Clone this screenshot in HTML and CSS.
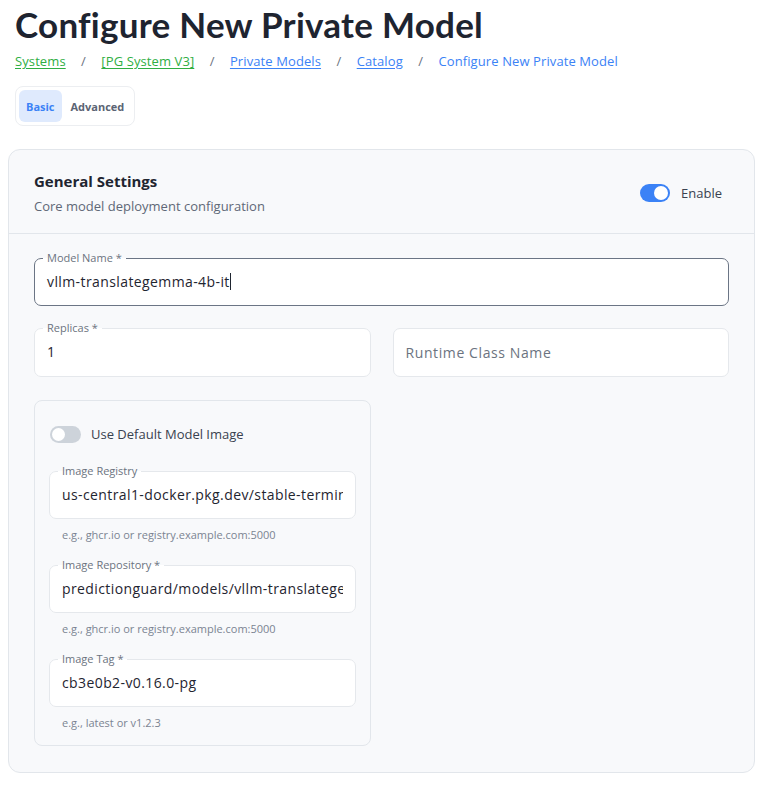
FILE: index.html
```html
<!DOCTYPE html>
<html lang="en">
<head>
<meta charset="utf-8">
<title>Configure New Private Model</title>
<link rel="stylesheet" href="styles.css">
</head>
<body>
<div class="page">
  <header class="page-head">
    <h1 class="page-title">Configure New Private Model</h1>
    <nav class="crumbs">
      <a class="crumb crumb-green" href="#">Systems</a>
      <span class="sep">/</span>
      <a class="crumb crumb-green" href="#">[PG System V3]</a>
      <span class="sep">/</span>
      <a class="crumb crumb-blue" href="#">Private Models</a>
      <span class="sep">/</span>
      <a class="crumb crumb-blue" href="#">Catalog</a>
      <span class="sep">/</span>
      <span class="crumb-current">Configure New Private Model</span>
    </nav>
    <div class="tabs">
      <span class="tab tab-active">Basic</span>
      <span class="tab">Advanced</span>
    </div>
  </header>

  <section class="card">
    <div class="card-head">
      <div class="card-titles">
        <div class="card-title">General Settings</div>
        <div class="card-sub">Core model deployment configuration</div>
      </div>
      <label class="switch-row">
        <span class="switch switch-on"><span class="knob"></span></span>
        <span class="switch-label">Enable</span>
      </label>
    </div>
    <div class="card-body">
      <fieldset class="field field-focus">
        <legend class="field-label">Model Name *</legend>
        <div class="field-value">vllm-translategemma-4b-it<span class="caret"></span></div>
      </fieldset>

      <div class="two-col">
        <fieldset class="field">
          <legend class="field-label">Replicas *</legend>
          <div class="field-value">1</div>
        </fieldset>
        <div class="field-plain">
          <span class="placeholder">Runtime Class Name</span>
        </div>
      </div>

      <div class="two-col">
        <div class="image-box">
          <label class="switch-row image-toggle">
            <span class="switch switch-off"><span class="knob"></span></span>
            <span class="switch-label">Use Default Model Image</span>
          </label>

          <fieldset class="field">
            <legend class="field-label">Image Registry</legend>
            <div class="field-value clip">us-central1-docker.pkg.dev/stable-terminus</div>
          </fieldset>
          <div class="helper">e.g., ghcr.io or registry.example.com:5000</div>

          <fieldset class="field">
            <legend class="field-label">Image Repository *</legend>
            <div class="field-value clip">predictionguard/models/vllm-translategemma</div>
          </fieldset>
          <div class="helper">e.g., ghcr.io or registry.example.com:5000</div>

          <fieldset class="field">
            <legend class="field-label">Image Tag *</legend>
            <div class="field-value clip">cb3e0b2-v0.16.0-pg</div>
          </fieldset>
          <div class="helper helper-last">e.g., latest or v1.2.3</div>
        </div>
        <div></div>
      </div>
    </div>
  </section>
</div>
</body>
</html>
```

FILE: styles.css
```css
* { box-sizing: border-box; }

html, body {
  margin: 0;
  padding: 0;
  background: #ffffff;
}

body {
  font-family: "Open Sans", "Noto Sans", sans-serif;
  color: #1f2937;
}

.page {
  padding: 0 14px 0 8px;
}

.page-head {
  padding-left: 7px;
}

.page-title {
  margin: 0;
  padding-top: 5px;
  font-family: "Lato", "DejaVu Sans", sans-serif;
  font-weight: 700;
  font-size: 35px;
  line-height: 38px;
  color: #1e2430;
  letter-spacing: 0.25px;
}

.crumbs {
  display: flex;
  align-items: center;
  gap: 15.4px;
  margin-top: 9px;
  font-size: 13px;
  line-height: 18px;
  letter-spacing: 0.1px;
}

.crumb {
  text-decoration: underline;
  text-underline-offset: 2px;
}

.crumb-green { color: #2fae43; }
.crumb-blue { color: #3b82f6; }
.crumb-current { color: #3b82f6; }
.sep { color: #6b7280; }

.tabs {
  display: inline-flex;
  gap: 2px;
  margin-top: 16px;
  padding: 3px;
  border: 1px solid #eceef1;
  border-radius: 8px;
  background: #ffffff;
}

.tab {
  display: flex;
  align-items: center;
  height: 32px;
  padding: 0 7px;
  border-radius: 6px;
  font-size: 11px;
  font-weight: 700;
  color: #5b6474;
}

.tab-active {
  background: #dfeafd;
  color: #3b82f6;
}

.card {
  margin-top: 23px;
  border: 1px solid #e2e6eb;
  border-radius: 12px;
  background: #f8f9fb;
}

.card-head {
  display: flex;
  align-items: center;
  justify-content: space-between;
  padding: 20px 32px 17px 25px;
  border-bottom: 1px solid #e2e6eb;
}

.card-title {
  font-size: 15px;
  line-height: 22px;
  font-weight: 700;
  color: #1f2530;
}

.card-sub {
  margin-top: 4px;
  font-size: 13px;
  line-height: 20px;
  color: #5f6877;
}

.switch-row {
  display: flex;
  align-items: center;
  gap: 11px;
}

.switch {
  position: relative;
  display: inline-block;
  width: 30px;
  height: 18px;
  border-radius: 9px;
}

.switch-on { background: #3b82f6; }
.switch-off { background: #cdd3da; width: 31px; height: 17px; }

.knob {
  position: absolute;
  top: 2px;
  width: 14px;
  height: 14px;
  border-radius: 50%;
  background: #ffffff;
}

.switch-on .knob { right: 2px; }
.switch-off .knob { left: 2px; top: 2px; width: 13px; height: 13px; }

.switch-label {
  font-size: 13px;
  color: #3a4250;
}

.card-body {
  padding: 17px 25px 26px;
}

.field {
  margin: 0;
  min-width: 0;
  padding: 0 12px;
  border: 1px solid #e5e8ec;
  border-radius: 7px;
  background: #ffffff;
}

.field-focus {
  border-color: #6b7585;
}

.field-label {
  margin-left: -4px;
  padding: 0 4px;
  font-size: 11px;
  line-height: 14px;
  color: #6b7380;
}

.field-value {
  padding: 7px 0 13px;
  font-size: 14px;
  line-height: 20px;
  letter-spacing: 0.4px;
  color: #1f2530;
  white-space: nowrap;
}

.clip {
  overflow: hidden;
}

.caret {
  display: inline-block;
  width: 1px;
  height: 17px;
  margin-left: 0;
  vertical-align: -3px;
  background: #1f2530;
}

.two-col {
  display: grid;
  grid-template-columns: minmax(0, 1fr) minmax(0, 1fr);
  gap: 22px;
  margin-top: 15px;
}

.field-plain {
  display: flex;
  align-items: center;
  height: 49px;
  margin-top: 7px;
  padding: 0 12px;
  border: 1px solid #e5e8ec;
  border-radius: 7px;
  background: #ffffff;
}

.placeholder {
  font-size: 14px;
  letter-spacing: 0.6px;
  color: #6b7380;
}

.image-box {
  min-width: 0;
  margin-top: 8px;
  padding: 19px 14px 14px;
  border: 1px solid #e2e6eb;
  border-radius: 8px;
  background: #f8f9fb;
}

.image-toggle {
  height: 28px;
  gap: 10px;
  margin-left: 1px;
  margin-bottom: 16px;
}

.helper {
  margin: 8px 0 15px 13px;
  font-size: 11px;
  line-height: 16px;
  color: #7b8492;
}

.helper-last {
  margin-bottom: 0;
}
```
